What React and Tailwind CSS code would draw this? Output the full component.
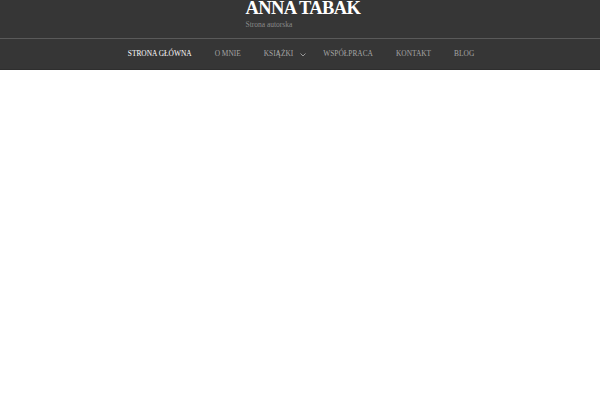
import React from 'react';

const navItems = [
  { label: 'Strona główna', active: true },
  { label: 'O mnie' },
  { label: 'Książki', dropdown: true },
  { label: 'Współpraca' },
  { label: 'Kontakt' },
  { label: 'Blog' },
];

function Chevron() {
  return (
    <svg width="6" height="4" viewBox="0 0 6 4" className="ml-[7px] mt-[2px]">
      <path d="M0.5 0.5 L3 3 L5.5 0.5" fill="none" stroke="#9a9a9a" strokeWidth="1" />
    </svg>
  );
}

export default function App() {
  return (
    <div className="min-h-[400px] bg-white" style={{ fontFamily: '"Liberation Serif", serif' }}>
      <header className="bg-[#363636]">
        <div className="h-[39px] border-b border-[#5a5a5a] flex justify-center">
          <div className="w-[112px] ml-[3px]">
            <div className="text-[18.5px] leading-[18px] font-bold text-white tracking-[-0.035em] mt-[-1px] whitespace-nowrap">
              ANNA TABAK
            </div>
            <div className="text-[7.5px] leading-[8px] text-[#8a8a8a] mt-[4px]">Strona autorska</div>
          </div>
        </div>
        <nav className="h-[31px] flex items-center justify-center gap-[23px] text-[7.4px] uppercase border-b border-[#2e2e2e] pl-[2px]">
          {navItems.map((item) => (
            <a
              key={item.label}
              href="#"
              className={`flex items-center whitespace-nowrap ${item.active ? 'text-white' : 'text-[#a5a5a5]'} ${item.dropdown ? 'mr-[-6px]' : ''}`}
            >
              {item.label}
              {item.dropdown && <Chevron />}
            </a>
          ))}
        </nav>
      </header>
    </div>
  );
}
